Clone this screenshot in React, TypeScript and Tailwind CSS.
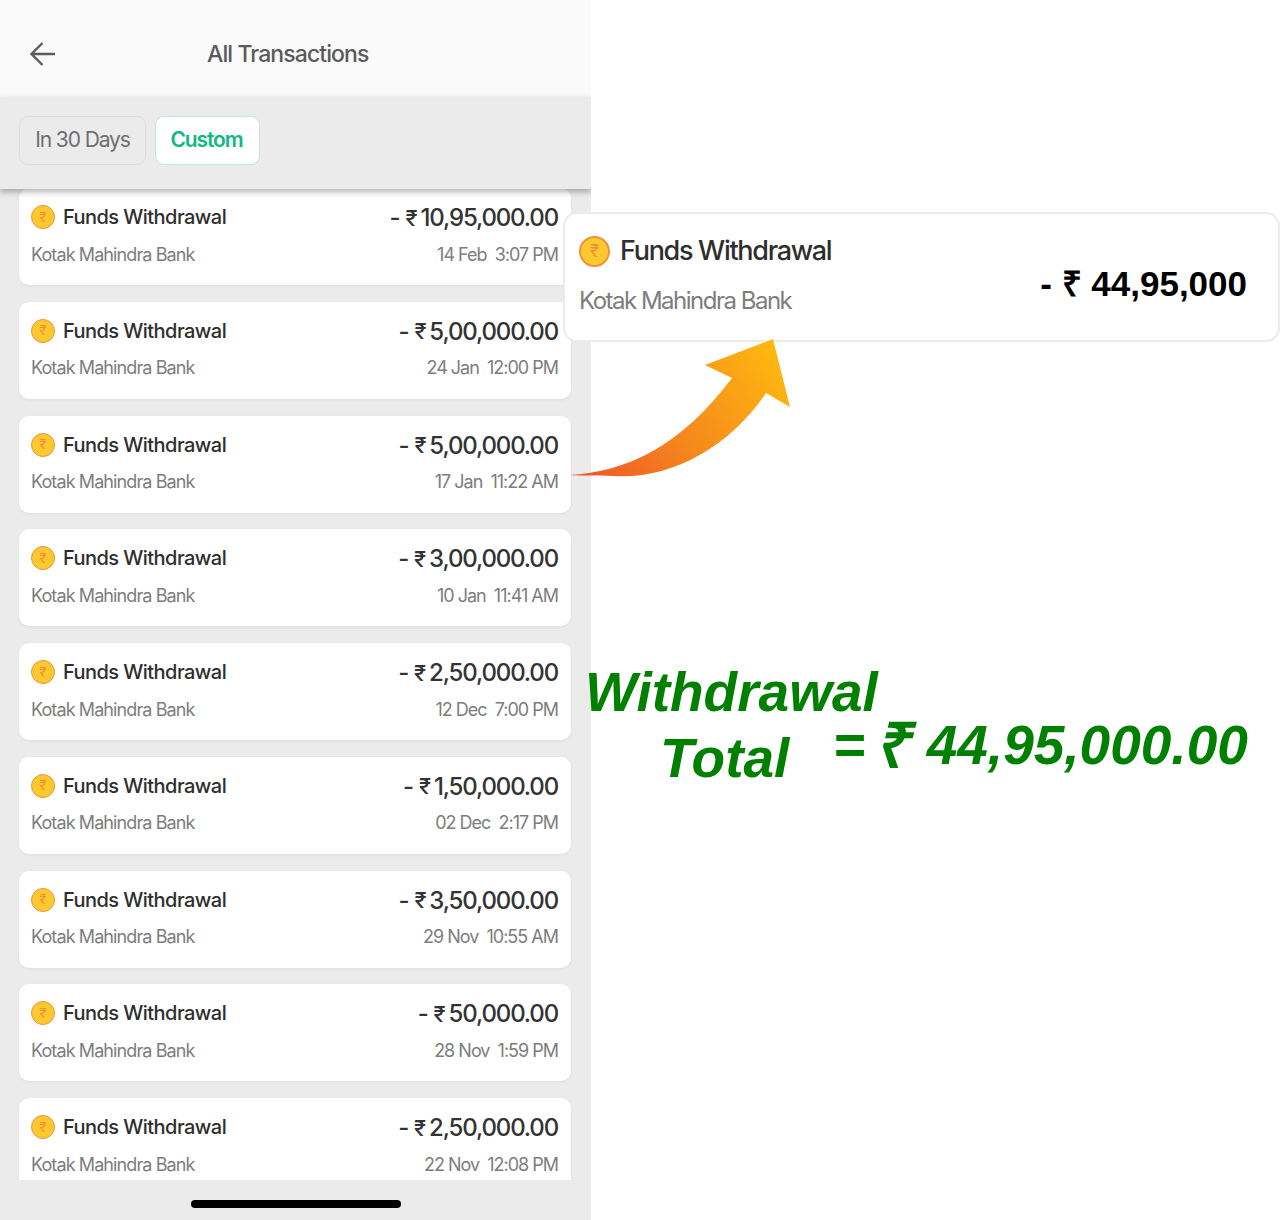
const rows = [
  { amount: "10,95,000.00", date: "14 Feb", time: "3:07 PM" },
  { amount: "5,00,000.00", date: "24 Jan", time: "12:00 PM" },
  { amount: "5,00,000.00", date: "17 Jan", time: "11:22 AM" },
  { amount: "3,00,000.00", date: "10 Jan", time: "11:41 AM" },
  { amount: "2,50,000.00", date: "12 Dec", time: "7:00 PM" },
  { amount: "1,50,000.00", date: "02 Dec", time: "2:17 PM" },
  { amount: "3,50,000.00", date: "29 Nov", time: "10:55 AM" },
  { amount: "50,000.00", date: "28 Nov", time: "1:59 PM" },
  { amount: "2,50,000.00", date: "22 Nov", time: "12:08 PM" },
];

const Coin = ({ big }: { big?: boolean }) => (
  <span
    className={
      big
        ? "flex h-[31px] w-[31px] shrink-0 items-center justify-center rounded-full border-2 border-[#f0923a] bg-[#fdc92f] text-[17px] leading-none text-[#ef8f3a]"
        : "flex h-[24px] w-[24px] shrink-0 items-center justify-center rounded-full border-[1.5px] border-[#f0923a] bg-[#fdc92f] text-[13px] leading-none text-[#ef8f3a]"
    }
  >
    ₹
  </span>
);

const Row = ({ amount, date, time }: { amount: string; date: string; time: string }) => (
  <div className="mb-[16.75px] h-[97px] w-[552px] shrink-0 rounded-[10px] bg-white pl-3 pr-[13px] pt-[16px] shadow-[0_1px_3px_rgba(0,0,0,0.06)]">
    <div className="flex h-[26px] items-center justify-between">
      <div className="flex items-center gap-2">
        <Coin />
        <span className="text-[20px] font-medium tracking-[-0.55px] text-[#2e2e2e]">Funds Withdrawal</span>
      </div>
      <span className="flex items-center pt-[2px] text-[24px] font-medium tracking-[-1.15px] text-[#333333]">
        <span className="mr-[6px]">-</span>
        <span className="mr-[4px] text-[22px]">₹</span>
        {amount}
      </span>
    </div>
    <div className="mt-[12px] flex h-[24px] items-center justify-between text-[18px] tracking-[-0.9px] text-[#7d7d7d]">
      <span>Kotak Mahindra Bank</span>
      <span className="whitespace-pre tracking-[-1px]">{date}  {time}</span>
    </div>
  </div>
);

const Arrow = () => (
  <svg
    className="absolute left-[569px] top-[336px]"
    width="226"
    height="142"
    viewBox="0 0 226 142"
  >
    <defs>
      <linearGradient id="arrowFill" x1="20" y1="140" x2="215" y2="10" gradientUnits="userSpaceOnUse">
        <stop offset="0" stopColor="#ee5a26" />
        <stop offset="0.45" stopColor="#f68a1c" />
        <stop offset="1" stopColor="#ffbb0f" />
      </linearGradient>
    </defs>
    <path
      d="M0 139 C58 136 112 110 163 42 L136 29 L204 3 L221 71 L197 57 C160 112 100 144 44 140 C28 139 12 140 0 139 Z"
      fill="url(#arrowFill)"
    />
  </svg>
);

export default function App() {
  return (
    <div className="relative flex h-[1220px] w-[1280px] overflow-hidden bg-white font-['Inter',sans-serif]">
      <div className="flex h-full w-[591px] shrink-0 flex-col overflow-hidden bg-[#ebebeb]">
        <header className="flex h-[97px] shrink-0 items-center bg-[#fafafa] pl-[29px] pt-[11px]">
          <svg width="28" height="26" viewBox="0 0 28 26" fill="none" stroke="#5c5c5c" strokeWidth="2.4">
            <path d="M26 13H3M13.5 2 2.5 13l11 11" />
          </svg>
          <h1 className="ml-[150px] text-[23px] font-medium tracking-[-0.9px] text-[#5a5a5a]">All Transactions</h1>
        </header>
        <div className="relative z-10 flex h-[92px] shrink-0 items-center gap-[9px] bg-[#ebebeb] pb-[6px] pl-[19px] shadow-[0_3px_6px_rgba(0,0,0,0.3)]">
          <div className="flex h-[49px] w-[127px] items-center justify-center rounded-[9px] border border-[#dedede] bg-[#ebebeb] text-[21px] tracking-[-1.1px] text-[#6e6e6e]">
            In 30 Days
          </div>
          <div className="flex h-[49px] w-[105px] items-center justify-center rounded-[9px] border border-[#bfe9d8] bg-white pr-[2px] text-[21px] font-semibold tracking-[-1.1px] text-[#10b981]">
            Custom
          </div>
        </div>
        <div className="-mt-[1px] flex h-[992px] shrink-0 flex-col overflow-hidden pl-[19px]">
          {rows.map((r) => (
            <Row key={r.amount + r.date} {...r} />
          ))}
        </div>
        <div className="relative z-10 flex h-[40px] shrink-0 justify-center bg-[#ebebeb] pt-[20px]">
          <div className="h-[8px] w-[210px] rounded-full bg-black" />
        </div>
      </div>

      <div className="-ml-[6px] flex flex-1 flex-col pt-[659px] font-['Liberation_Sans',sans-serif] font-bold italic text-[#008000]">
        <div className="flex">
          <div className="w-[248px] whitespace-nowrap text-[55px] leading-[66px]">
            <div>Withdrawal</div>
            <div className="ml-[75px]">Total</div>
          </div>
          <div className="mt-[66px] whitespace-nowrap text-[55px] leading-[40px]">
            = <span className="-ml-[6px] mr-[2px] align-[-3px] text-[62px] leading-[0]">₹</span> 44,95,000.00
          </div>
        </div>
      </div>

      <div className="absolute left-[563px] top-[212px] flex h-[130px] w-[717px] items-center justify-between rounded-[14px] border-2 border-[#ececec] bg-white pl-[14px] pr-[31px]">
        <div className="-mt-[4px]">
          <div className="flex items-center gap-[10px]">
            <Coin big />
            <span className="text-[27px] font-medium tracking-[-1.3px] text-[#2e2e2e]">Funds Withdrawal</span>
          </div>
          <div className="mt-[11px] text-[24px] tracking-[-1.5px] text-[#7d7d7d]">Kotak Mahindra Bank</div>
        </div>
        <div className="pt-[15px] font-['Liberation_Sans',sans-serif] text-[35px] font-bold text-black">- ₹ 44,95,000</div>
      </div>
      <Arrow />
    </div>
  );
}
